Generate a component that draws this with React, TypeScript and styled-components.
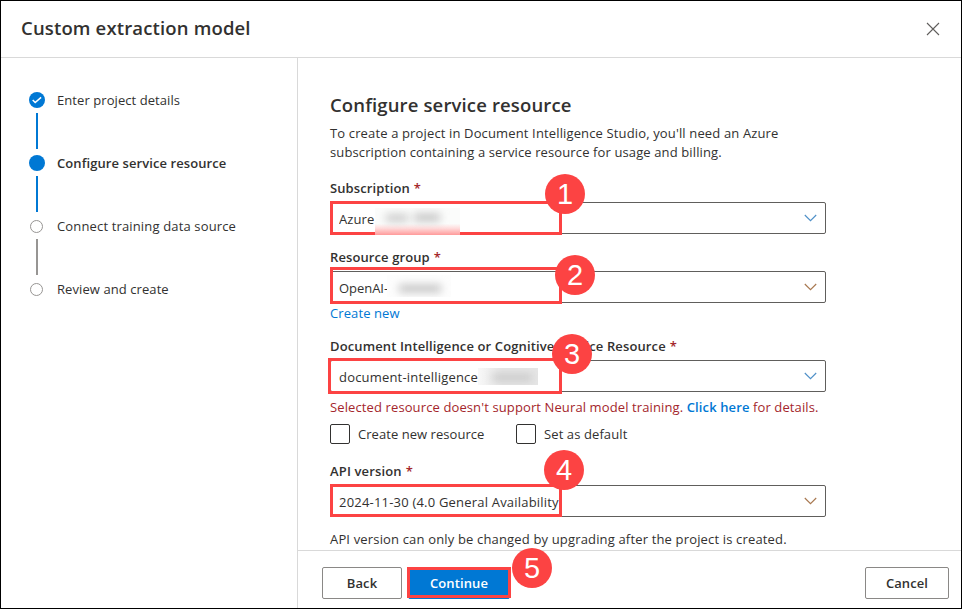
import React from "react";
import styled, { createGlobalStyle } from "styled-components";

const GlobalStyle = createGlobalStyle`
  *, *::before, *::after { box-sizing: border-box; }
  body { margin: 0; background: #fff; }
  button { font: inherit; }
`;

const Dialog = styled.div`
  width: 962px;
  height: 609px;
  display: flex;
  flex-direction: column;
  position: relative;
  overflow: hidden;
  border: 1px solid #000;
  background: #fff;
  color: #323130;
  font-family: "Open Sans", "Noto Sans", sans-serif;
  font-size: 13px;
  line-height: 20px;
  white-space: nowrap;
`;

const Text = styled.span<{ $ls?: number }>`
  letter-spacing: ${(p) => p.$ls ?? 0.1}px;
`;

const Header = styled.header`
  height: 57px;
  flex: none;
  display: flex;
  align-items: center;
  justify-content: space-between;
  padding: 0 21px 2px 20px;
  border-bottom: 1px solid #d9d9d9;
`;

const Title = styled.h1`
  margin: 0;
  font-size: 18.5px;
  font-weight: 600;
  line-height: 28px;
`;

const CloseButton = styled.button`
  display: flex;
  padding: 0;
  margin-top: 2px;
  border: 0;
  background: none;
`;

const Body = styled.div`
  flex: 1;
  display: flex;
  min-height: 0;
`;

const Sidebar = styled.nav`
  width: 297px;
  flex: none;
  padding: 32px 0 0 28px;
  border-right: 1px solid #d9d9d9;
`;

const Step = styled.div<{ $current?: boolean }>`
  display: flex;
  align-items: center;
  gap: 12px;
  height: 20px;
  font-weight: ${(p) => (p.$current ? 600 : 400)};
`;

const StepIcon = styled.svg`
  width: 16px;
  height: 16px;
  flex: none;
`;

const Connector = styled.div<{ $pending?: boolean }>`
  width: 2px;
  height: 36px;
  margin: 3px 0 4px 7px;
  background: ${(p) => (p.$pending ? "#979593" : "#0078d4")};
`;

const Main = styled.main`
  flex: 1;
  display: flex;
  flex-direction: column;
  min-width: 0;
`;

const Form = styled.div`
  flex: 1;
  padding: 33px 0 0 32px;
`;

const Heading = styled.h2`
  margin: 0;
  font-size: 18.5px;
  font-weight: 600;
  line-height: 28px;
`;

const Description = styled.p`
  margin: 5px 0 16px;
  line-height: 19px;
`;

const Label = styled.div`
  height: 20px;
  margin-bottom: 4px;
  font-weight: 600;
`;

const Required = styled.span`
  margin-left: 4px;
  color: #a4262c;
`;

const Select = styled.div<{ $gap?: number }>`
  width: 496px;
  height: 32px;
  margin-bottom: ${(p) => p.$gap ?? 0}px;
  display: flex;
  align-items: center;
  justify-content: space-between;
  padding: 2px 8px 0 8px;
  border: 1px solid #605e5c;
  border-radius: 2px;
`;

const Value = styled.span`
  display: flex;
  align-items: center;
  width: 220px;
  overflow: hidden;
`;

const Chevron = styled.svg`
  width: 13px;
  height: 8px;
  margin-top: -3px;
`;

const CreateLink = styled.a`
  display: block;
  height: 20px;
  margin-bottom: 13px;
  color: #0078d4;
`;

const ErrorText = styled.div`
  margin: 5px 0 7px;
  color: #a4262c;
  a { color: #0078d4; font-weight: 600; }
`;

const Checks = styled.div`
  display: flex;
  margin-bottom: 17px;
`;

const Check = styled.label<{ $width: number }>`
  display: flex;
  gap: 8px;
  width: ${(p) => p.$width}px;
`;

const Box = styled.span`
  width: 20px;
  height: 20px;
  border: 1px solid #323130;
  border-radius: 2px;
`;

const Note = styled.div`
  margin-top: 12px;
`;

const Footer = styled.footer`
  height: 58px;
  flex: none;
  display: flex;
  align-items: flex-start;
  gap: 6px;
  padding: 16px 12px 0 24px;
  border-top: 1px solid #d9d9d9;
`;

const Button = styled.button<{ $width: number; $primary?: boolean; $end?: boolean }>`
  width: ${(p) => p.$width}px;
  height: 32px;
  padding: 0;
  margin-left: ${(p) => (p.$end ? "auto" : "0")};
  border: 1px solid ${(p) => (p.$primary ? "#0078d4" : "#8a8886")};
  border-radius: 2px;
  background: ${(p) => (p.$primary ? "#0078d4" : "#fff")};
  color: ${(p) => (p.$primary ? "#fff" : "#323130")};
  font-weight: 600;
`;

/* Callouts floating over the form */
const Frame = styled.div<{ $x: number; $y: number; $w: number; $h: number }>`
  position: absolute;
  left: ${(p) => p.$x - 1}px;
  top: ${(p) => p.$y - 1}px;
  width: ${(p) => p.$w}px;
  height: ${(p) => p.$h}px;
  border: 3px solid #fc4343;
`;

const Badge = styled.div<{ $x: number; $y: number }>`
  position: absolute;
  left: ${(p) => p.$x - 21}px;
  top: ${(p) => p.$y - 21}px;
  width: 40px;
  height: 40px;
  border-radius: 50%;
  background: #fc4343;
  color: #fff;
  font-family: "Liberation Sans", Arial, sans-serif;
  font-size: 29px;
  line-height: 41px;
  text-align: center;
`;

const Redaction = styled.div<{ $x: number; $y: number; $w: number; $h: number; $bg: string }>`
  position: absolute;
  left: ${(p) => p.$x - 1}px;
  top: ${(p) => p.$y - 1}px;
  width: ${(p) => p.$w}px;
  height: ${(p) => p.$h}px;
  background: ${(p) => p.$bg};
  overflow: hidden;
`;

const Smudge = styled.span<{ $x: number; $y: number; $w: number; $h: number }>`
  position: absolute;
  left: ${(p) => p.$x}px;
  top: ${(p) => p.$y}px;
  width: ${(p) => p.$w}px;
  height: ${(p) => p.$h}px;
  background: #bdbdbd;
  filter: blur(4px);
`;

const frames = [
  [330, 201, 232, 34],
  [330, 267, 232, 37],
  [328, 358, 234, 36],
  [330, 484, 232, 33],
  [407, 567, 104, 31],
];

const badges = [
  [565, 194],
  [575, 275],
  [572, 354],
  [564, 470],
  [532, 568],
];

function StepMark({ state }: { state: "done" | "current" | "pending" }) {
  return (
    <StepIcon viewBox="0 0 16 16">
      {state === "pending" ? (
        <circle cx="7.5" cy="8.5" r="6" fill="none" stroke="#979593" />
      ) : (
        <circle cx="8" cy="8" r="8" fill="#0078d4" />
      )}
      {state === "done" && (
        <path d="M3.7 8l2.5 2.5 5.9-5.1" fill="none" stroke="#fff" strokeWidth="1.5" />
      )}
    </StepIcon>
  );
}

function DropArrow({ color }: { color: string }) {
  return (
    <Chevron viewBox="0 0 13 8" fill="none" stroke={color} strokeWidth="1.15">
      <path d="M.8 1l5.7 5.7L12.2 1" />
    </Chevron>
  );
}

export default function App() {
  return (
    <>
      <GlobalStyle />
      <Dialog>
        <Header>
          <Title><Text $ls={0.15}>Custom extraction model</Text></Title>
          <CloseButton aria-label="Close">
            <svg width="14" height="14" viewBox="0 0 14 14" stroke="#605e5c" strokeWidth="1.1">
              <path d="M1 1l12 12M13 1L1 13" />
            </svg>
          </CloseButton>
        </Header>
        <Body>
          <Sidebar>
            <Step><StepMark state="done" /><Text $ls={0.07}>Enter project details</Text></Step>
            <Connector />
            <Step $current><StepMark state="current" /><Text $ls={0.08}>Configure service resource</Text></Step>
            <Connector />
            <Step><StepMark state="pending" /><Text $ls={0.15}>Connect training data source</Text></Step>
            <Connector $pending />
            <Step><StepMark state="pending" /><Text $ls={0.08}>Review and create</Text></Step>
          </Sidebar>
          <Main>
            <Form>
              <Heading><Text $ls={0.14}>Configure service resource</Text></Heading>
              <Description>
                <Text $ls={0.14}>To create a project in Document Intelligence Studio, you'll need an Azure</Text>
                <br />
                <Text $ls={0.12}>subscription containing a service resource for usage and billing.</Text>
              </Description>
              <Label><Text>Subscription</Text><Required>*</Required></Label>
              <Select $gap={13}><Value><Text>Azure</Text></Value><DropArrow color="#4f90c8" /></Select>
              <Label><Text>Resource group</Text><Required>*</Required></Label>
              <Select><Value><Text $ls={-0.05}>OpenAI-</Text></Value><DropArrow color="#a87850" /></Select>
              <CreateLink><Text>Create new</Text></CreateLink>
              <Label><Text $ls={0.12}>Document Intelligence or Cognitive Service Resource</Text><Required>*</Required></Label>
              <Select><Value><Text $ls={0.19}>document-intelligence</Text></Value><DropArrow color="#4f90c8" /></Select>
              <ErrorText>
                <Text $ls={0.115}>Selected resource doesn't support Neural model training. <a>Click here</a> for details.</Text>
              </ErrorText>
              <Checks>
                <Check $width={186}><Box /><Text $ls={0.05}>Create new resource</Text></Check>
                <Check $width={120}><Box /><Text>Set as default</Text></Check>
              </Checks>
              <Label><Text $ls={0.15}>API version</Text><Required>*</Required></Label>
              <Select><Value><Text $ls={0.2}>2024-11-30 (4.0 General Availability)</Text></Value><DropArrow color="#a87850" /></Select>
              <Note><Text $ls={0.16}>API version can only be changed by upgrading after the project is created.</Text></Note>
            </Form>
            <Footer>
              <Button $width={80}><Text>Back</Text></Button>
              <Button $width={102} $primary><Text>Continue</Text></Button>
              <Button $width={84} $end><Text>Cancel</Text></Button>
            </Footer>
          </Main>
        </Body>
        {frames.map(([x, y, w, h]) => <Frame key={y} $x={x} $y={y} $w={w} $h={h} />)}
        <Redaction $x={375} $y={208} $w={85} $h={27} $bg="linear-gradient(#fbfcfb 58%, #ffdcdc 75%, #ff9a9a 100%)">
          <Smudge $x={11} $y={7} $w={22} $h={6} />
          <Smudge $x={39} $y={6} $w={26} $h={7} />
        </Redaction>
        <Redaction $x={387} $y={275} $w={64} $h={22} $bg="#fdfdfd">
          <Smudge $x={12} $y={10} $w={42} $h={7} />
        </Redaction>
        <Redaction $x={478} $y={368} $w={60} $h={17} $bg="linear-gradient(90deg, #f8f8f8, #e6e6e6 40%)">
          <Smudge $x={14} $y={7} $w={40} $h={5} />
        </Redaction>
        {badges.map(([x, y], i) => <Badge key={x} $x={x} $y={y}>{i + 1}</Badge>)}
      </Dialog>
    </>
  );
}
